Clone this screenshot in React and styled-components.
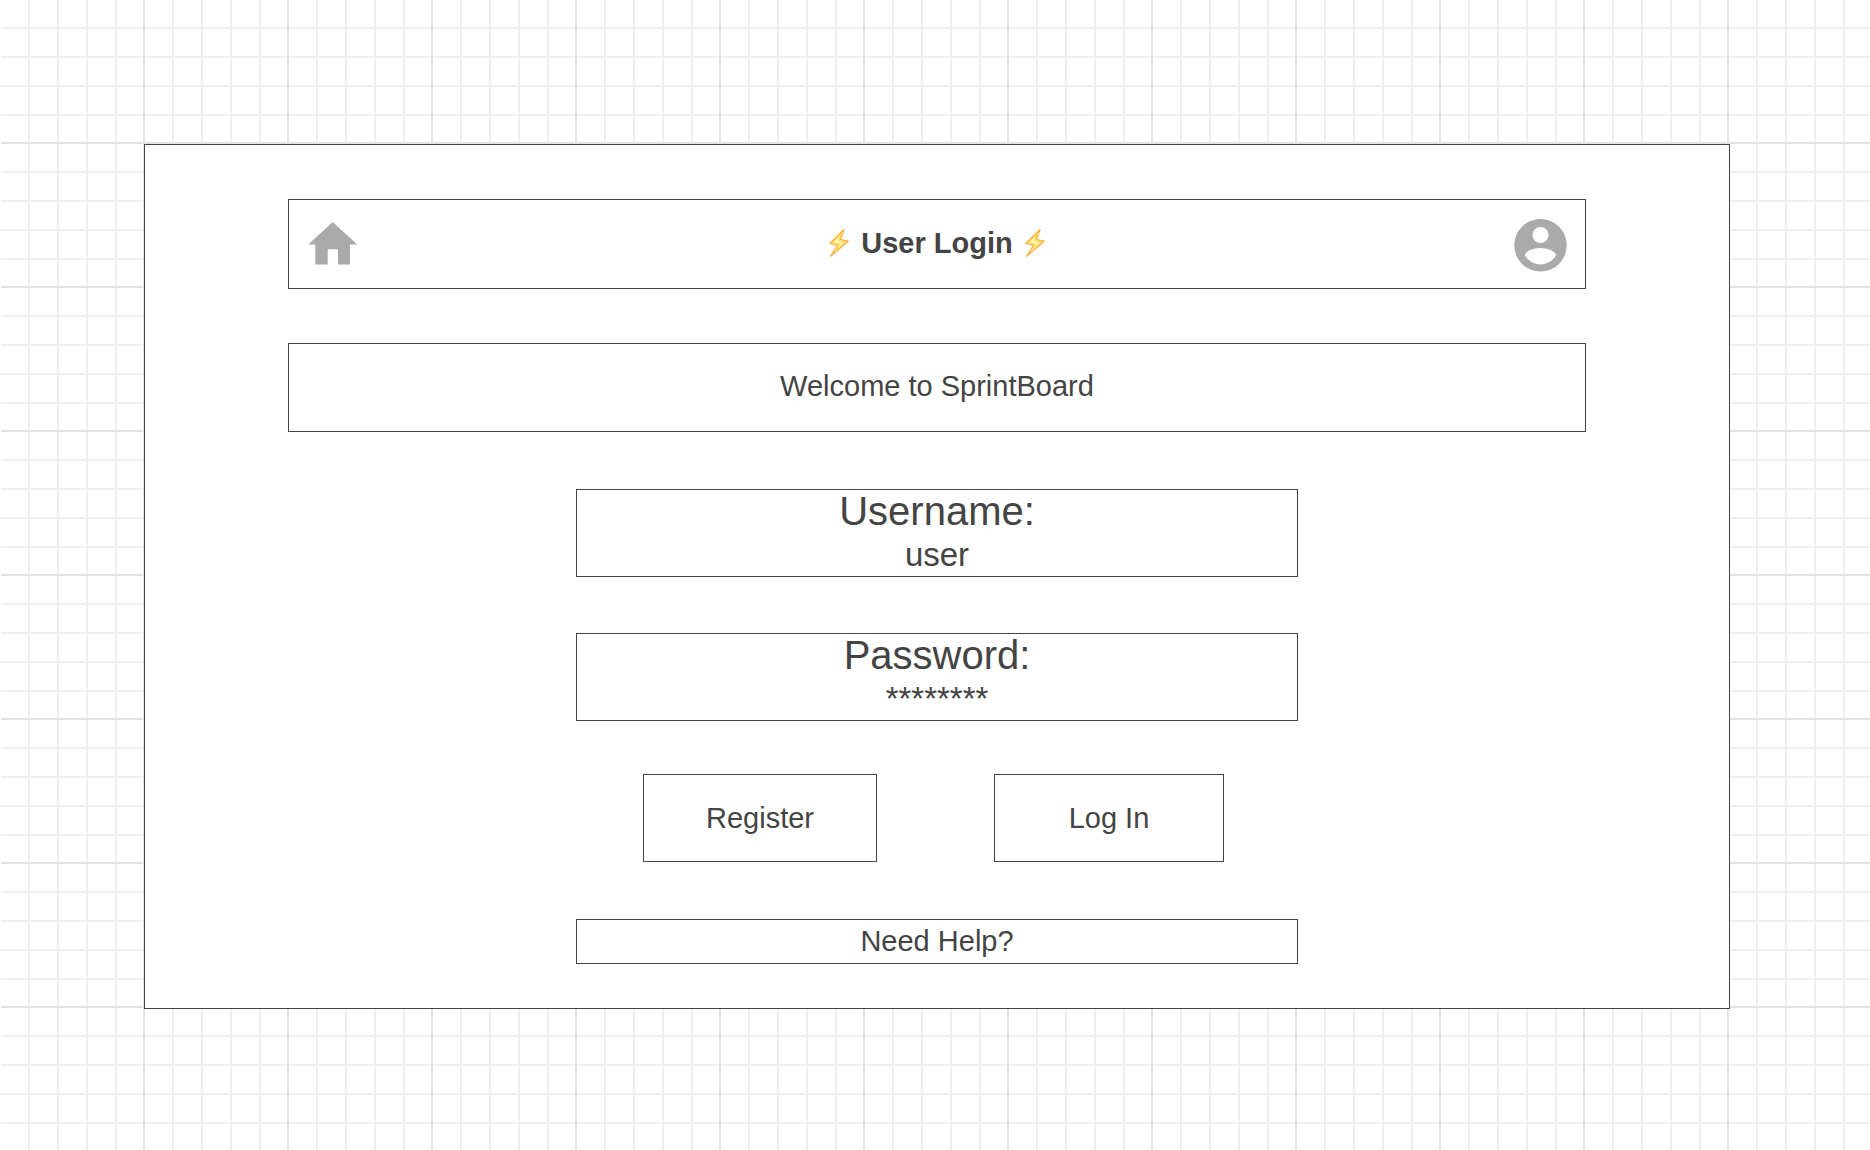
import React from 'react';
import styled, { createGlobalStyle } from 'styled-components';

const ink = '#444444';

const GlobalStyle = createGlobalStyle`
  *, *::before, *::after { box-sizing: border-box; }
  body {
    margin: 0;
    background: #ffffff;
    color: ${ink};
    font-family: "Liberation Sans", Arial, sans-serif;
  }
`;

const Canvas = styled.div`
  position: relative;
  min-height: 100vh;
  padding: 144px 140px 141px 144px;
`;

const GridSvg = styled.svg`
  position: absolute;
  inset: 0;
  width: 100%;
  height: 100%;
  z-index: -1;
`;

const Panel = styled.main`
  display: flex;
  flex-direction: column;
  align-items: center;
  padding: 54px 143px 44px;
  background: #ffffff;
  border: 1px solid ${ink};
`;

const Bar = styled.header`
  display: flex;
  align-items: center;
  justify-content: space-between;
  width: 100%;
  height: 90px;
  padding: 2px 18px 0;
  border: 1px solid ${ink};
`;

const Title = styled.h1`
  display: flex;
  align-items: center;
  gap: 11px;
  margin: 0;
  padding-bottom: 4px;
  font-size: 29px;
  line-height: 34px;
`;

const IconButton = styled.button`
  display: flex;
  padding: 0;
  background: none;
  border: 0;
  color: #aaaaaa;
  cursor: pointer;
`;

const Welcome = styled.p`
  display: flex;
  align-items: center;
  justify-content: center;
  width: 100%;
  height: 89px;
  margin: 54px 0 57px;
  padding-bottom: 4px;
  border: 1px solid ${ink};
  font-size: 29px;
  line-height: 34px;
`;

const Form = styled.form`
  display: flex;
  flex-direction: column;
  align-items: center;
  width: 100%;
  max-width: 722px;
`;

const Fields = styled.div`
  display: flex;
  flex-direction: column;
  gap: 56px;
  width: 100%;
`;

const Field = styled.div`
  display: flex;
  flex-direction: column;
  align-items: center;
  gap: 3px;
  height: 88px;
  border: 1px solid ${ink};
`;

const FieldLabel = styled.label`
  font-size: 40px;
  line-height: 42px;
`;

const FieldInput = styled.input`
  width: 100%;
  height: 40px;
  padding: 0;
  background: none;
  border: 0;
  outline: 0;
  color: inherit;
  font: inherit;
  font-size: 33px;
  text-align: center;
`;

const Actions = styled.div`
  display: flex;
  justify-content: space-between;
  width: 100%;
  padding: 53px 74px 57px 67px;
`;

const ActionButton = styled.button`
  width: ${(p) => p.$width}px;
  height: 88px;
  padding: 0;
  background: #ffffff;
  border: 1px solid ${ink};
  color: inherit;
  font: inherit;
  font-size: 29px;
  cursor: pointer;
`;

const HelpLink = styled.a`
  display: flex;
  align-items: center;
  justify-content: center;
  width: 100%;
  height: 45px;
  padding-bottom: 2px;
  border: 1px solid ${ink};
  color: inherit;
  font-size: 29px;
  line-height: 34px;
  text-decoration: none;
`;

const TILE = 144;
const MINOR_LINES = [27, 56, 85, 114];

function GridPaper() {
  return (
    <GridSvg aria-hidden="true">
      <defs>
        <pattern id="grid" x="1" y="0" width={TILE} height={TILE} patternUnits="userSpaceOnUse">
          {MINOR_LINES.map((at) => (
            <g key={at} fill="#efefef">
              <rect x={at} y="0" width="2" height={TILE} />
              <rect x="0" y={at} width={TILE} height="2" />
            </g>
          ))}
          <g fill="#e2e2e2">
            <rect x="142" y="0" width="2" height={TILE} />
            <rect x="0" y="142" width={TILE} height="2" />
          </g>
        </pattern>
      </defs>
      <rect x="1" width="100%" height="100%" fill="url(#grid)" />
    </GridSvg>
  );
}

function Bolt() {
  return (
    <svg width="22" height="30" viewBox="0 0 22 30" aria-hidden="true">
      <path
        d="M16 1.500 1.800 15.500 9.500 17.300 2.500 28.300 20.300 13.200 12.500 11.500Z"
        fill="#fff4a8"
        stroke="#f5ac45"
        strokeWidth="1.2"
        strokeLinejoin="round"
      />
      <path d="M14.500 4.500 10.500 12.500 17.500 13.800 9 21 11.500 16.200 4.500 14.600Z" fill="none" stroke="#fdd84e" strokeWidth="1" />
    </svg>
  );
}

function Home() {
  return (
    <svg width="54" height="54" viewBox="0 0 54 54" aria-hidden="true">
      <path d="M25.700 4 1.200 26.500H8.300V46.500H20.700V31.300H31V46.500H43V26.500H50.300Z" fill="currentColor" />
    </svg>
  );
}

function Account() {
  return (
    <svg width="54" height="54" viewBox="0 0 54 54" aria-hidden="true">
      <path
        fillRule="evenodd"
        d="M27.500 1a26.300 26.300 0 1 0 0 52.600a26.300 26.300 0 1 0 0-52.600ZM27.500 9a8 8 0 1 1 0 16a8 8 0 1 1 0-16ZM27.500 30c7 0 15.500 3 15.500 7.500C39.500 43 34 46.500 27.500 46.500S15.500 43 12 37.500C12 33 20.500 30 27.500 30Z"
        fill="currentColor"
      />
    </svg>
  );
}

export default function App() {
  return (
    <>
      <GlobalStyle />
      <Canvas>
        <GridPaper />
        <Panel>
          <Bar>
            <IconButton type="button" aria-label="Home"><Home /></IconButton>
            <Title><Bolt />User Login<Bolt /></Title>
            <IconButton type="button" aria-label="Account"><Account /></IconButton>
          </Bar>
          <Welcome>Welcome to SprintBoard</Welcome>
          <Form onSubmit={(e) => e.preventDefault()}>
            <Fields>
              <Field>
                <FieldLabel htmlFor="username">Username:</FieldLabel>
                <FieldInput id="username" defaultValue="user" />
              </Field>
              <Field>
                <FieldLabel htmlFor="password">Password:</FieldLabel>
                <FieldInput id="password" defaultValue="********" />
              </Field>
            </Fields>
            <Actions>
              <ActionButton type="button" $width={234}>Register</ActionButton>
              <ActionButton type="submit" $width={230}>Log In</ActionButton>
            </Actions>
            <HelpLink href="#help">Need Help?</HelpLink>
          </Form>
        </Panel>
      </Canvas>
    </>
  );
}
